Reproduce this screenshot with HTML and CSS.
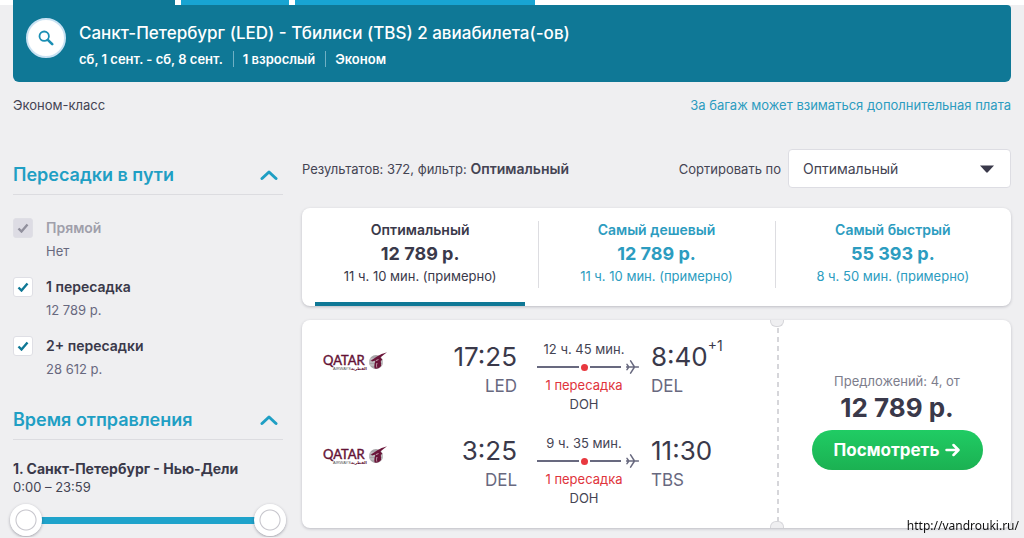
FILE: index.html
```
<!DOCTYPE html>
<html lang="ru">
<head>
<meta charset="utf-8">
<meta name="viewport" content="width=device-width, initial-scale=1">
<title>Санкт-Петербург (LED) - Тбилиси (TBS)</title>
<link rel="stylesheet" href="styles.css">
</head>
<body>
<svg class="sprite" aria-hidden="true">
  <symbol id="plane" viewBox="0 0 13 14">
    <path d="M0.5 7H12.5M8.5 7L4.6 0.9M8.5 7L4.6 13.1M2.8 7L1 4.4M2.8 7L1 9.6" fill="none" stroke="#68697f" stroke-width="1.5" stroke-linecap="round"/>
  </symbol>
  <symbol id="chevron" viewBox="0 0 18 12">
    <path d="M2 9.5L9 3L16 9.5" fill="none" stroke="#1f9fc4" stroke-width="3" stroke-linecap="round" stroke-linejoin="round"/>
  </symbol>
  <symbol id="oryx" viewBox="0 0 20 20">
    <circle cx="8" cy="11" r="7" fill="#a9a7aa"/>
    <path d="M2 8H14M1 11H15M2 14H14" stroke="#d2d0d2" stroke-width="1"/>
    <path d="M19 1.2C15 2.4 12 3.6 9 5.4L3 9.4L4 10.5L7.5 9.4C6.5 12 6 14.6 6.6 17.6C9 18 11.6 17.2 13.2 14.8L12.8 9.8L14.4 8.8L12.4 6.4C14.6 4.6 17 3 19 1.2Z" fill="#6a1539"/>
    <path d="M8 9.5L10.5 8.6M9 12C8.4 13.6 8.4 15 8.8 16.5" fill="none" stroke="#c8a9b6" stroke-width="1"/>
  </symbol>
</svg>

<nav class="tabstrip" aria-label="Разделы">
  <a class="tab tab-active" href="#flights" aria-label="Авиабилеты"></a>
  <a class="tab tab-short" href="#hotels" aria-label="Отели"></a>
  <a class="tab tab-long" href="#cars" aria-label="Прокат автомобилей"></a>
</nav>

<div class="page">
  <header class="search">
    <button class="search-button" type="button" aria-label="Изменить поиск">
      <svg width="16" height="16" viewBox="0 0 16 16" fill="none" stroke="#1b8fb4"><circle cx="6.2" cy="6.2" r="4.7" stroke-width="1.8"/><path d="M9.8 9.8L14.2 14.2" stroke-width="2.6" stroke-linecap="round"/></svg>
    </button>
    <div>
      <h1 class="route">Санкт-Петербург (LED) - Тбилиси (TBS) 2 авиабилета(-ов)</h1>
      <ul class="details">
        <li>сб, 1 сент. - сб, 8 сент.</li>
        <li>1 взрослый</li>
        <li>Эконом</li>
      </ul>
    </div>
  </header>

  <div class="notice">
    <span>Эконом-класс</span>
    <a href="#baggage">За багаж может взиматься дополнительная плата</a>
  </div>

  <div class="columns">
    <aside class="filters">
      <section>
        <h2><button class="filter-title" type="button"><span>Пересадки в пути</span><svg width="18" height="12"><use href="#chevron"/></svg></button></h2>
        <div class="stops">
          <label class="stop stop-off"><input class="check" type="checkbox" checked disabled><span class="stop-text"><b>Прямой</b><span>Нет</span></span></label>
          <label class="stop"><input class="check" type="checkbox" checked><span class="stop-text"><b>1 пересадка</b><span>12 789 р.</span></span></label>
          <label class="stop"><input class="check" type="checkbox" checked><span class="stop-text"><b>2+ пересадки</b><span>28 612 р.</span></span></label>
        </div>
      </section>
      <section>
        <h2><button class="filter-title" type="button"><span>Время отправления</span><svg width="18" height="12"><use href="#chevron"/></svg></button></h2>
        <div class="departure">
          <h3>1. Санкт-Петербург - Нью-Дели</h3>
          <p>0:00 – 23:59</p>
          <div class="slider">
            <input class="range" type="range" min="0" max="1439" value="0" aria-label="Вылет не раньше">
            <input class="range range-top" type="range" min="0" max="1439" value="1439" aria-label="Вылет не позже">
          </div>
        </div>
      </section>
    </aside>

    <main class="results">
      <div class="toolbar">
        <p>Результатов: 372, фильтр: <b>Оптимальный</b></p>
        <div class="sort">
          <label for="sort">Сортировать по</label>
          <div class="select-box">
            <select id="sort"><option>Оптимальный</option><option>Самый дешевый</option><option>Самый быстрый</option></select>
            <svg class="caret" width="14" height="8" viewBox="0 0 14 8"><path d="M0 0.5H14L7.8 7.3Q7 8 6.2 7.3Z" fill="#3a394a"/></svg>
          </div>
        </div>
      </div>

      <div class="summary">
        <button class="option option-active" type="button"><b>Оптимальный</b><strong>12 789 р.</strong><span>11 ч. 10 мин. (примерно)</span></button>
        <button class="option" type="button"><b>Самый дешевый</b><strong>12 789 р.</strong><span>11 ч. 10 мин. (примерно)</span></button>
        <button class="option" type="button"><b>Самый быстрый</b><strong>55 393 р.</strong><span>8 ч. 50 мин. (примерно)</span></button>
      </div>

      <article class="ticket">
        <div class="legs">
          <div class="leg">
            <svg class="logo" width="66" height="22" viewBox="0 0 66 22">
              <text x="1" y="14" class="logo-name">QATAR</text>
              <text x="11" y="19" class="logo-sub">AIRWAYS</text>
              <text x="45" y="19" class="logo-arabic">القطرية</text>
              <use href="#oryx" x="46" y="0" width="20" height="20"/>
            </svg>
            <div class="point point-from"><time>17:25</time><span>LED</span></div>
            <div class="stopover">
              <span>12 ч. 45 мин.</span>
              <div class="line"><i></i><em></em><i class="line-end"></i><svg width="13" height="14"><use href="#plane"/></svg></div>
              <span class="stop-count">1 пересадка</span>
              <span>DOH</span>
            </div>
            <div class="point"><time>8:40<sup>+1</sup></time><span>DEL</span></div>
          </div>
          <div class="leg">
            <svg class="logo" width="66" height="22" viewBox="0 0 66 22">
              <text x="1" y="14" class="logo-name">QATAR</text>
              <text x="11" y="19" class="logo-sub">AIRWAYS</text>
              <text x="45" y="19" class="logo-arabic">القطرية</text>
              <use href="#oryx" x="46" y="0" width="20" height="20"/>
            </svg>
            <div class="point point-from"><time>3:25</time><span>DEL</span></div>
            <div class="stopover">
              <span>9 ч. 35 мин.</span>
              <div class="line"><i></i><em></em><i class="line-end"></i><svg width="13" height="14"><use href="#plane"/></svg></div>
              <span class="stop-count">1 пересадка</span>
              <span>DOH</span>
            </div>
            <div class="point"><time>11:30</time><span>TBS</span></div>
          </div>
        </div>
        <div class="price">
          <span>Предложений: 4, от</span>
          <strong>12 789 р.</strong>
          <button class="view" type="button">Посмотреть
            <svg width="15" height="14" viewBox="0 0 15 14"><path d="M1.5 7H13M8.5 2L13.5 7L8.5 12" fill="none" stroke="#fff" stroke-width="2.5" stroke-linecap="round" stroke-linejoin="round"/></svg>
          </button>
        </div>
      </article>
    </main>
  </div>
</div>
<a class="watermark" href="#source">http://vandrouki.ru/</a>
</body>
</html>
```
FILE: styles.css
```
* { box-sizing: border-box; }

body {
  margin: 0;
  background: #efeff1;
  color: #444453;
  font: 13px/18px Inter, "Noto Sans", sans-serif;
  overflow: hidden;
}

h1, h2, h3, p, ul { margin: 0; padding: 0; }
button, select { font: inherit; color: inherit; border: 0; }
button { padding: 0; background: none; cursor: pointer; }
a { color: #2c9cc0; text-decoration: none; }
b { font-size: 14px; font-weight: 600; }
svg { display: block; flex: none; }
.sprite { position: absolute; width: 0; height: 0; }

.tabstrip { display: flex; gap: 6px; height: 5px; padding: 0 13px; background: #fff; }
.tab { background: #18a4d2; }
.tab-active { width: 162px; background: #0f7896; }
.tab-short { width: 108px; }
.tab-long { width: 240px; }

.page { padding: 0 13px; }

.search {
  display: flex;
  align-items: flex-start;
  gap: 13px;
  height: 77px;
  padding: 13px;
  background: #0f7896;
  border-radius: 0 4px 6px 6px;
  color: #fff;
}
.search-button {
  display: flex;
  align-items: center;
  justify-content: center;
  width: 40px;
  height: 40px;
  border: 2px solid #c9e2f3;
  border-radius: 50%;
  background: #fff;
}
.route { font-size: 17px; line-height: 30px; font-weight: 500; }
.details { display: flex; list-style: none; line-height: 16px; padding-top: 3px; font-weight: 600; }
.details li + li { margin-left: 10px; padding-left: 9px; border-left: 1px solid #6fb0c4; }

.notice { display: flex; justify-content: space-between; padding: 14px 0 0; }

.columns { display: flex; gap: 19px; padding-top: 35px; }
.filters { width: 270px; flex: none; }
.results { flex: 1; min-width: 0; }

.filter-title {
  display: flex;
  align-items: center;
  justify-content: space-between;
  width: 100%;
  height: 46px;
  padding: 7px 5px 0 0;
  border-bottom: 1px solid #dcdce0;
  color: #1f9fc4;
  font-size: 18px;
  font-weight: 600;
}
.stops { display: grid; gap: 18px; padding: 22px 0 18px; }
.stop { display: flex; gap: 13px; }
.check {
  appearance: none;
  width: 20px;
  height: 20px;
  margin: 1px 0 0;
  border: 1px solid #dfdfe5;
  border-radius: 3px;
  background: #fff url("data:image/svg+xml,%3Csvg xmlns='http://www.w3.org/2000/svg' width='12' height='10'%3E%3Cpath d='M1.5 5.5L4.5 8.5L10.5 1.5' fill='none' stroke='%230f7896' stroke-width='2.4'/%3E%3C/svg%3E") center no-repeat;
}
.check:disabled {
  background: #dddce4 url("data:image/svg+xml,%3Csvg xmlns='http://www.w3.org/2000/svg' width='12' height='10'%3E%3Cpath d='M1.5 5.5L4.5 8.5L10.5 1.5' fill='none' stroke='%2391909d' stroke-width='2.4'/%3E%3C/svg%3E") center no-repeat;
}
.stop-text { display: grid; grid-template-rows: 23px 18px; line-height: 22px; color: #68697f; }
.stop-text b { color: #3a394a; }
.stop-off b { color: #a09fab; }

.departure { padding-top: 19px; }
.departure h3 { font-size: 14px; font-weight: 700; line-height: 20px; color: #3a394a; }
.departure p { line-height: 17px; }
.slider { position: relative; height: 34px; margin: 7px -3px 0; }
.range {
  appearance: none;
  display: block;
  width: 100%;
  height: 34px;
  margin: 0;
  background: linear-gradient(#1fa3cb, #1fa3cb) center / calc(100% - 32px) 7px no-repeat;
}
.range-top { position: absolute; inset: 0; background: none; pointer-events: none; }
.range::-webkit-slider-thumb {
  appearance: none;
  width: 32px;
  height: 32px;
  border-radius: 50%;
  background: radial-gradient(circle, #fff 9px, #c4c3ca 10px, #c4c3ca 10px, #fff 11px);
  box-shadow: 0 1px 3px rgba(40, 40, 60, 0.4);
  pointer-events: auto;
}

.toolbar { display: flex; justify-content: space-between; align-items: center; padding-bottom: 20px; }
.sort { display: flex; align-items: center; gap: 7px; }
.select-box { position: relative; width: 223px; }
.select-box select {
  appearance: none;
  width: 100%;
  height: 39px;
  padding: 0 14px;
  border: 1px solid #dddde3;
  border-radius: 4px;
  background: #fff;
  font-size: 14px;
}
.caret { position: absolute; right: 17px; top: 16px; pointer-events: none; }

.summary, .ticket {
  display: flex;
  background: #fff;
  border-radius: 8px;
  box-shadow: 0 1px 3px rgba(40, 40, 60, 0.25);
}
.summary { height: 98px; }
.option {
  position: relative;
  display: flex;
  flex: 1;
  flex-direction: column;
  align-items: center;
  padding-top: 13px;
  color: #2c9cc0;
}
.option strong { font-size: 18px; line-height: 29px; font-weight: 700; }
.option span { line-height: 16px; }
.option b { line-height: 18px; }
.option + .option::before { content: ""; position: absolute; left: 0; top: 13px; height: 67px; border-left: 1px solid #dddde1; }
.option-active { color: #3a394a; }
.option-active::after { content: ""; position: absolute; left: 13px; right: 13px; bottom: 0; height: 4px; background: #0f7896; }

.ticket { position: relative; margin-top: 14px; }
.legs { display: grid; flex: 1; gap: 16px; padding: 20px 20px 16px; }
.leg { display: flex; height: 78px; }
.logo { margin-top: 11px; }
.logo-name { font: 400 13px Lato, sans-serif; fill: #641235; stroke: #641235; stroke-width: 0.4px; }
.logo-sub { font: 4px "Liberation Sans", sans-serif; fill: #555; }
.logo-arabic { font: bold 4px "DejaVu Sans", sans-serif; fill: #641235; text-anchor: end; }
.point { display: flex; flex-direction: column; align-items: flex-start; font-size: 17px; line-height: 24px; color: #68697f; }
.point time { position: relative; font-size: 26px; line-height: 34px; color: #3a394a; }
.point sup { position: absolute; left: 100%; top: -4px; font-size: 14px; line-height: 20px; }
.point-from { flex: 1; align-items: flex-end; padding-right: 20px; }
.stopover { display: flex; flex-direction: column; align-items: center; width: 94px; margin-right: 20px; line-height: 18px; }
.stop-count { color: #e0343c; }
.stopover .stop-count + span { line-height: 21px; }
.line { display: flex; align-items: center; justify-content: space-between; gap: 2px; height: 18px; width: 102px; align-self: flex-start; }
.line i { flex: 43; height: 2px; background: #68697f; }
.line .line-end { flex: 31; margin-right: 3px; }
.line em { width: 7px; height: 7px; border-radius: 50%; background: #e8383f; }
.legs .point:last-child { width: 107px; }

.price {
  position: relative;
  display: flex;
  flex-direction: column;
  align-items: center;
  justify-content: center;
  width: 233px;
  padding: 0 0 6px 5px;
  color: #7d7d8c;
}
.price::before {
  content: "";
  position: absolute;
  left: -1px;
  top: 8px;
  bottom: 6px;
  width: 2px;
  background: repeating-linear-gradient(#d6d6da 0 5px, transparent 5px 9px);
}
.ticket::before, .ticket::after {
  content: "";
  position: absolute;
  right: 227px;
  z-index: 1;
  width: 12px;
  height: 6px;
  border: 1px solid #d6d6da;
  background: #efeff1;
}
.ticket::before { top: 0; border-top: 0; border-radius: 0 0 6px 6px; }
.ticket::after { bottom: 0; border-bottom: 0; border-radius: 6px 6px 0 0; }
.price strong { font-size: 26px; line-height: 36px; font-weight: 700; color: #3a394a; }
.view {
  display: flex;
  align-items: center;
  justify-content: center;
  gap: 6px;
  width: 171px;
  height: 40px;
  margin-top: 4px;
  border-radius: 20px;
  background: linear-gradient(#20cc64, #1bb152);
  color: #fff;
  font-size: 17px;
  font-weight: 700;
}

.watermark {
  position: fixed;
  right: 5px;
  bottom: 3px;
  color: #111;
  font: 12px/18px "Noto Sans", sans-serif;
}
```
